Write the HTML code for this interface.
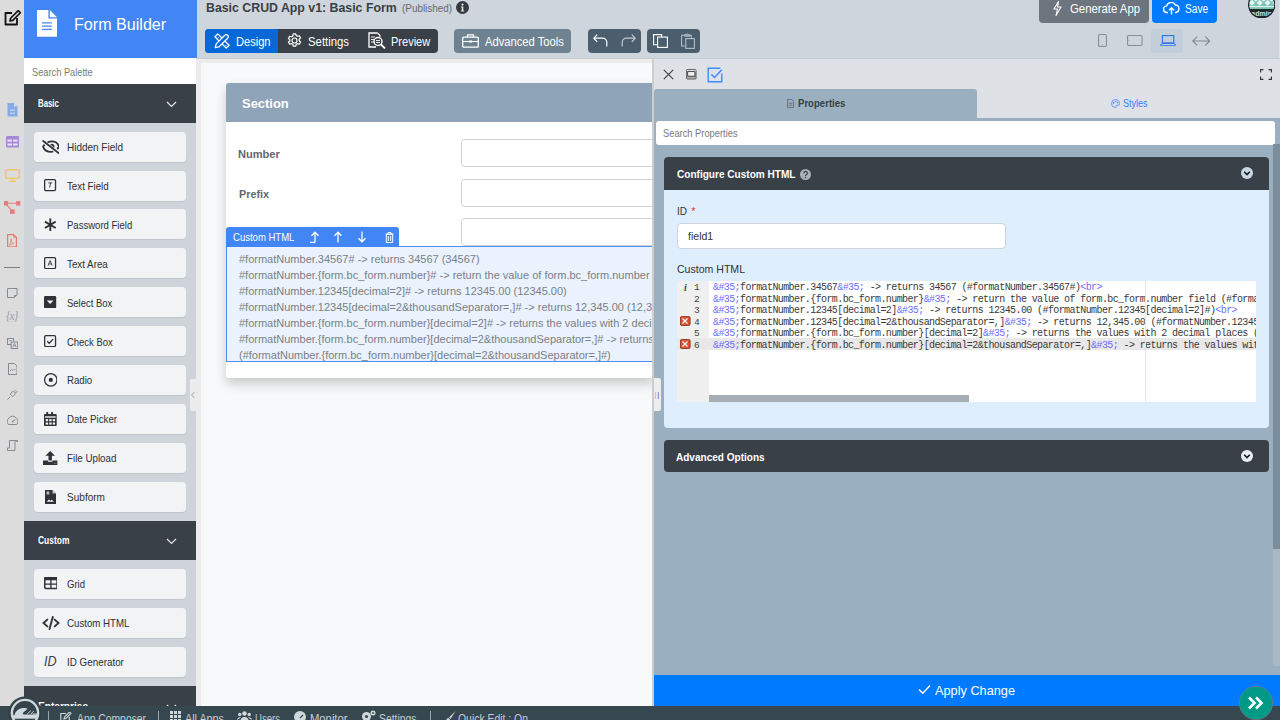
<!DOCTYPE html>
<html><head><meta charset="utf-8">
<style>*{box-sizing:border-box;margin:0;padding:0}
html,body{width:1280px;height:720px;overflow:hidden;font-family:"Liberation Sans",sans-serif;background:#f8f9fa}
.a{position:absolute}
svg{display:block}
.tx{line-height:1;white-space:nowrap;transform-origin:0 0}
.ln{position:absolute;left:0;height:11.5px;font-family:"Liberation Mono",monospace;font-size:10px;letter-spacing:-0.6px;color:#3a3a3a;white-space:nowrap;line-height:11.5px}
.ln .n{position:absolute;left:17px;top:1.5px;color:#444;font-size:9.5px}
.ln .c{position:absolute;left:36px;top:1.5px}
.ln .b{color:#6d6dff}
</style></head><body>
<div class="a" style="left:0;top:0;width:24px;height:720px;background:#dcdcdc"></div>
<svg class="a" style="left:3px;top:10px" width="19" height="17" viewBox="0 0 19 17"><path d="M9 3H2.5v11.5H14V8" fill="none" stroke="#111" stroke-width="1.8" stroke-linejoin="round"/><path d="M7 11l.6-2.8 7.6-7.6 2.2 2.2-7.6 7.6z" fill="none" stroke="#111" stroke-width="1.6" stroke-linejoin="round"/></svg>
<svg class="a" style="left:7px;top:102.5px" width="11" height="14" viewBox="0 0 11 14"><path d="M.5 0h6.5l3.5 3.5V13.5H.5z" fill="#86ace8"/><path d="M7 0v3.5h3.5z" fill="#dcdcdc"/><path d="M3 7.2h5M3 10.2h5" stroke="#d6e2f5" stroke-width="1"/></svg>
<svg class="a" style="left:5.8px;top:136.4px" width="13.4" height="11.4" viewBox="0 0 13.4 11.4"><rect x="0" y="0" width="13.4" height="11.4" rx="1.5" fill="#a88ad7"/><rect x="1.5" y="3.6" width="4.4" height="2" fill="#e9e2f3"/><rect x="7.1" y="3.6" width="4.4" height="2" fill="#e9e2f3"/><rect x="1.5" y="7.5" width="4.4" height="2" fill="#e9e2f3"/><rect x="7.1" y="7.5" width="4.4" height="2" fill="#e9e2f3"/></svg>
<svg class="a" style="left:5px;top:168.5px" width="15" height="13" viewBox="0 0 15 13"><rect x=".75" y=".75" width="13.5" height="8.5" rx="1" fill="none" stroke="#f1c66e" stroke-width="1.5"/><path d="M7.5 9.5v2.2M3.8 12.2h7.4" stroke="#f1c66e" stroke-width="1.4"/></svg>
<svg class="a" style="left:4px;top:201px" width="17" height="13" viewBox="0 0 17 13"><rect x="0" y="0" width="4.1" height="4.6" fill="#e57b7b"/><rect x="12.1" y="0" width="4.2" height="4.6" fill="#e57b7b"/><rect x="6" y="8.4" width="4.7" height="4.4" fill="#e57b7b"/><path d="M4 2.3h8.2M3.2 4.3L7 8.6" stroke="#e57b7b" stroke-width="1.1"/></svg>
<svg class="a" style="left:7px;top:233.5px" width="10" height="13.5" viewBox="0 0 10 13.5"><path d="M.6.6h6l2.8 2.8v9.5H.6z" fill="none" stroke="#e77b6b" stroke-width="1.2"/><path d="M6.6.6v2.8h2.8" fill="none" stroke="#e77b6b" stroke-width=".8"/><path d="M2.5 11c1-2 2-4.3 1.8-5.8-.1-.8-.8-.4-.5.7.4 1.5 1.8 3.3 2.8 3.7-.9 0-3 .4-4.1 1.4z" fill="none" stroke="#e77b6b" stroke-width=".8"/></svg>
<div class="a" style="left:4px;top:267px;width:16.4px;height:1px;background:#7a7f85"></div>
<svg class="a" style="left:7px;top:288px" width="10.5" height="10" viewBox="0 0 10.5 10"><path d="M.5.5h9.5v6.5L7 9.5H.5z" fill="none" stroke="#858b94" stroke-width="1"/><path d="M10 7H7v2.5z" fill="#858b94"/></svg>
<div class="a" style="left:6px;top:311px;font-size:11.5px;line-height:1;font-style:italic;color:#9ba0a8;letter-spacing:-1px;font-family:'Liberation Serif',serif">{x}</div>
<svg class="a" style="left:6.7px;top:337.9px" width="11.2" height="11" viewBox="0 0 11.2 11"><rect x=".5" y=".5" width="6" height="6" fill="none" stroke="#858b94" stroke-width="1"/><rect x="4.2" y="4" width="6.5" height="6.5" fill="#dcdcdc" stroke="#858b94" stroke-width="1"/><path d="M5.8 9.2l1.7-4 1.7 4M6.5 7.8h2" fill="none" stroke="#858b94" stroke-width=".8"/><path d="M2 2.5h2.5" stroke="#858b94" stroke-width=".8"/></svg>
<svg class="a" style="left:7.7px;top:362.9px" width="9.5" height="12" viewBox="0 0 9.5 12"><path d="M.5.5h6l2.5 2.5v8.5H.5z" fill="none" stroke="#858b94" stroke-width="1"/><path d="M2 8l1.5-1.5 1.5 1 1.5-1.5 1 1" fill="none" stroke="#858b94" stroke-width=".8"/></svg>
<svg class="a" style="left:7px;top:388.7px" width="11" height="11" viewBox="0 0 11 11"><path d="M.5 10.5l2.5-2.5M3.3 5.2l2.5 2.5 1.8-1.8c.8-.8.8-2 0-2.6l-.2-.2c-.7-.7-1.9-.7-2.6 0z" fill="none" stroke="#858b94" stroke-width="1"/><path d="M7 2.5L9 .5M8.5 4L10.5 2" stroke="#858b94" stroke-width="1"/></svg>
<svg class="a" style="left:6.7px;top:415px" width="11.2" height="10" viewBox="0 0 11.2 10"><path d="M1.3 9.5A5.2 5.2 0 1 1 9.9 9.5z" fill="none" stroke="#858b94" stroke-width="1"/><path d="M5.6 6.6l2.6-2.2" stroke="#858b94" stroke-width="1.1"/><circle cx="5.6" cy="6.6" r=".9" fill="#858b94"/></svg>
<svg class="a" style="left:6.7px;top:439.6px" width="11.2" height="11" viewBox="0 0 11.2 11"><path d="M2.5 8V.5h8v1.5M2.5 8H.5v2.5h7.5V1.2M9 1.2h1.7" fill="none" stroke="#858b94" stroke-width="1"/></svg>

<div class="a" style="left:24px;top:0;width:173px;height:58px;background:#4285f4"></div>
<svg class="a" style="left:37px;top:10px" width="20" height="27" viewBox="0 0 20 27"><path d="M0 0H11.4V8.6H20V26.7H0z" fill="#fff"/><path d="M12.8 0L20 7.2H12.8z" fill="#fff"/><path d="M5 12.9h9.8M5 16.1h9.8M5 19.3h9.8" stroke="#4285f4" stroke-width="1.3"/></svg>
<div class="a tx" style="transform:scaleX(0.9475);left:73.5px;top:16.05px;font-size:17px;color:#fff;">Form Builder</div>
<div class="a" style="left:24px;top:58px;width:172px;height:26px;background:#fff"></div>
<div class="a tx" style="transform:scaleX(0.8412);left:32.3px;top:66.95px;font-size:11px;color:#7a7a7a;">Search Palette</div>
<div class="a" style="left:24px;top:84px;width:172.5px;height:621px;background:#ced4da"></div>
<div class="a" style="left:24px;top:84px;width:172.5px;height:39px;background:#3a4047"></div>
<div class="a tx" style="transform:scaleX(0.7456);left:37.5px;top:98.38px;font-size:10.5px;color:#fff;font-weight:bold;">Basic</div>
<svg class="a" style="left:166px;top:101px" width="11" height="7" viewBox="0 0 11 7"><path d="M1 1l4.5 4.5L10 1" fill="none" stroke="#e8e8e8" stroke-width="1.2"/></svg>
<div class="a" style="left:34px;top:131.6px;width:152px;height:30px;background:#f1f3f5;border-radius:4px;box-shadow:0 1px 1px rgba(0,0,0,.07)"></div>
<div class="a" style="left:35.5px;top:131.6px;width:30px;height:30px;display:flex;align-items:center;justify-content:center"><svg width="17.7" height="14" viewBox="0 0 17.7 14"><path d="M1.2 1L16.6 13" stroke="#2f3237" stroke-width="1.8" stroke-linecap="round"/><path d="M5.5 2.6C6.8 1.8 8.4 1.4 10 1.4c3.4 0 6 2.4 7 4.9-.4 1-1 2-1.8 2.8" fill="none" stroke="#2f3237" stroke-width="1.8"/><path d="M2.6 4.6C1.9 5.3 1.4 6 1.1 6.8c1.2 3 4 5 7.9 5 .8 0 1.6-.1 2.3-.3" fill="none" stroke="#2f3237" stroke-width="1.8"/><path d="M8.2 4.2a2.9 2.9 0 0 1 4.1 3.7z" fill="#2f3237"/></svg></div>
<div class="a tx" style="transform:scaleX(0.8828);left:67px;top:142.00px;font-size:11.3px;color:#2c3035;">Hidden Field</div>
<div class="a" style="left:34px;top:170.5px;width:152px;height:30px;background:#f1f3f5;border-radius:4px;box-shadow:0 1px 1px rgba(0,0,0,.07)"></div>
<div class="a" style="left:35.5px;top:170.5px;width:30px;height:30px;display:flex;align-items:center;justify-content:center"><svg width="12.2" height="12.2" viewBox="0 0 12.2 12.2"><rect x=".65" y=".65" width="10.9" height="10.9" rx="1.2" fill="none" stroke="#2f3237" stroke-width="1.3"/><path d="M4.3 3.9h4M6.6 3.9L5.6 8.6" stroke="#2f3237" stroke-width=".9"/></svg></div>
<div class="a tx" style="transform:scaleX(0.8605);left:67px;top:180.90px;font-size:11.3px;color:#2c3035;">Text Field</div>
<div class="a" style="left:34px;top:209.4px;width:152px;height:30px;background:#f1f3f5;border-radius:4px;box-shadow:0 1px 1px rgba(0,0,0,.07)"></div>
<div class="a" style="left:35.5px;top:209.4px;width:30px;height:30px;display:flex;align-items:center;justify-content:center"><svg width="12.6" height="13.6" viewBox="0 0 12.6 13.6"><path d="M6.3 .5v12.6M.9 3.6l10.8 6.4M11.7 3.6L.9 10" stroke="#2f3237" stroke-width="1.9"/></svg></div>
<div class="a tx" style="transform:scaleX(0.8442);left:67px;top:219.80px;font-size:11.3px;color:#2c3035;">Password Field</div>
<div class="a" style="left:34px;top:248.3px;width:152px;height:30px;background:#f1f3f5;border-radius:4px;box-shadow:0 1px 1px rgba(0,0,0,.07)"></div>
<div class="a" style="left:35.5px;top:248.3px;width:30px;height:30px;display:flex;align-items:center;justify-content:center"><svg width="12.2" height="12.2" viewBox="0 0 12.2 12.2"><rect x=".65" y=".65" width="10.9" height="10.9" rx="1.2" fill="none" stroke="#2f3237" stroke-width="1.3"/><path d="M4 8.7l2.1-5.2 2.1 5.2M4.8 7h2.6" fill="none" stroke="#2f3237" stroke-width=".85"/></svg></div>
<div class="a tx" style="transform:scaleX(0.8661);left:67px;top:258.69px;font-size:11.3px;color:#2c3035;">Text Area</div>
<div class="a" style="left:34px;top:287.2px;width:152px;height:30px;background:#f1f3f5;border-radius:4px;box-shadow:0 1px 1px rgba(0,0,0,.07)"></div>
<div class="a" style="left:35.5px;top:287.2px;width:30px;height:30px;display:flex;align-items:center;justify-content:center"><svg width="12.2" height="12.2" viewBox="0 0 12.2 12.2"><rect x="0" y="0" width="12.2" height="12.2" rx="1.3" fill="#2f3237"/><path d="M2.8 4.6h6.6L6.1 8z" fill="#f1f3f5"/></svg></div>
<div class="a tx" style="transform:scaleX(0.8368);left:67px;top:297.59px;font-size:11.3px;color:#2c3035;">Select Box</div>
<div class="a" style="left:34px;top:326.1px;width:152px;height:30px;background:#f1f3f5;border-radius:4px;box-shadow:0 1px 1px rgba(0,0,0,.07)"></div>
<div class="a" style="left:35.5px;top:326.1px;width:30px;height:30px;display:flex;align-items:center;justify-content:center"><svg width="12.2" height="12.2" viewBox="0 0 12.2 12.2"><rect x=".65" y=".65" width="10.9" height="10.9" rx="1.2" fill="none" stroke="#2f3237" stroke-width="1.3"/><path d="M3.2 6.3l2 2 3.9-4.2" fill="none" stroke="#2f3237" stroke-width="1.3"/></svg></div>
<div class="a tx" style="transform:scaleX(0.8382);left:67px;top:336.50px;font-size:11.3px;color:#2c3035;">Check Box</div>
<div class="a" style="left:34px;top:365.0px;width:152px;height:30px;background:#f1f3f5;border-radius:4px;box-shadow:0 1px 1px rgba(0,0,0,.07)"></div>
<div class="a" style="left:35.5px;top:365.0px;width:30px;height:30px;display:flex;align-items:center;justify-content:center"><svg width="13.6" height="13.8" viewBox="0 0 13.6 13.8"><circle cx="6.8" cy="6.9" r="6.2" fill="none" stroke="#2f3237" stroke-width="1.25"/><circle cx="6.8" cy="6.9" r="2.1" fill="#2f3237"/></svg></div>
<div class="a tx" style="transform:scaleX(0.8533);left:67px;top:375.39px;font-size:11.3px;color:#2c3035;">Radio</div>
<div class="a" style="left:34px;top:403.9px;width:152px;height:30px;background:#f1f3f5;border-radius:4px;box-shadow:0 1px 1px rgba(0,0,0,.07)"></div>
<div class="a" style="left:35.5px;top:403.9px;width:30px;height:30px;display:flex;align-items:center;justify-content:center"><svg width="12.7" height="14" viewBox="0 0 12.7 14"><path d="M3.2 0v2.6M8.1 0v2.6" stroke="#2f3237" stroke-width="1.9"/><rect x="0" y="2" width="12.7" height="12" rx=".8" fill="#2f3237"/><rect x="1" y="4" width="10.7" height="2" fill="#b8b8b8"/><rect x="1.7" y="7.1" width="2.4" height="2.1" fill="#f1f3f5"/><rect x="5.2" y="7.1" width="2.4" height="2.1" fill="#f1f3f5"/><rect x="8.7" y="7.1" width="2.4" height="2.1" fill="#f1f3f5"/><rect x="1.7" y="10.5" width="2.4" height="2.1" fill="#f1f3f5"/><rect x="5.2" y="10.5" width="2.4" height="2.1" fill="#f1f3f5"/><rect x="8.7" y="10.5" width="2.4" height="2.1" fill="#f1f3f5"/></svg></div>
<div class="a tx" style="transform:scaleX(0.8563);left:67px;top:414.29px;font-size:11.3px;color:#2c3035;">Date Picker</div>
<div class="a" style="left:34px;top:442.8px;width:152px;height:30px;background:#f1f3f5;border-radius:4px;box-shadow:0 1px 1px rgba(0,0,0,.07)"></div>
<div class="a" style="left:35.5px;top:442.8px;width:30px;height:30px;display:flex;align-items:center;justify-content:center"><svg width="14.4" height="14.2" viewBox="0 0 14.4 14.2"><path d="M7.2 0L2.5 4.8h3v4.8h3.4V4.8h3z" fill="#2f3237"/><path d="M0 9.4h5v1.4h4.4V9.4h5v4.8H0z" fill="#2f3237"/><path d="M11 12.3h.9M12.5 12.3h.9" stroke="#aaa" stroke-width=".8"/></svg></div>
<div class="a tx" style="transform:scaleX(0.8643);left:67px;top:453.19px;font-size:11.3px;color:#2c3035;">File Upload</div>
<div class="a" style="left:34px;top:481.7px;width:152px;height:30px;background:#f1f3f5;border-radius:4px;box-shadow:0 1px 1px rgba(0,0,0,.07)"></div>
<div class="a" style="left:35.5px;top:481.7px;width:30px;height:30px;display:flex;align-items:center;justify-content:center"><svg width="11" height="14" viewBox="0 0 11 14"><path d="M0 0h7.5L11 3.5V14H0z" fill="#2f3237"/><path d="M7.5 0v3.5H11z" fill="#c8c8c8"/><rect x="1.5" y="1.5" width="2.8" height="3" fill="#b8b8b8"/><path d="M1.8 11.8l2-2.4 1.5 1.4 1.2-1 2.6 2z" fill="#f1f3f5"/></svg></div>
<div class="a tx" style="transform:scaleX(0.8899);left:67px;top:492.09px;font-size:11.3px;color:#2c3035;">Subform</div>
<div class="a" style="left:24px;top:520.8px;width:172.5px;height:39px;background:#3a4047"></div>
<div class="a tx" style="transform:scaleX(0.8032);left:37.5px;top:535.17px;font-size:10.5px;color:#fff;font-weight:bold;">Custom</div>
<svg class="a" style="left:166px;top:537.8px" width="11" height="7" viewBox="0 0 11 7"><path d="M1 1l4.5 4.5L10 1" fill="none" stroke="#e8e8e8" stroke-width="1.2"/></svg>
<div class="a" style="left:34px;top:568.8px;width:152px;height:30px;background:#f1f3f5;border-radius:4px;box-shadow:0 1px 1px rgba(0,0,0,.07)"></div>
<div class="a" style="left:35.5px;top:568.4px;width:30px;height:30px;display:flex;align-items:center;justify-content:center"><svg width="13.8" height="12.3" viewBox="0 0 13.8 12.3"><rect x=".75" y=".75" width="12.3" height="10.8" rx="1" fill="none" stroke="#2f3237" stroke-width="1.5"/><rect x="0" y="0" width="13.8" height="3.2" rx="1" fill="#2f3237"/><path d="M6.9 3v8.5M.7 7.1h12.4" stroke="#2f3237" stroke-width="1.3"/></svg></div>
<div class="a tx" style="transform:scaleX(0.8433);left:67px;top:579.19px;font-size:11.3px;color:#2c3035;">Grid</div>
<div class="a" style="left:34px;top:607.7px;width:152px;height:30px;background:#f1f3f5;border-radius:4px;box-shadow:0 1px 1px rgba(0,0,0,.07)"></div>
<div class="a" style="left:35.5px;top:608.2px;width:30px;height:30px;display:flex;align-items:center;justify-content:center"><svg width="18" height="14" viewBox="0 0 18 14"><path d="M5.3 3.6L1.5 7l3.8 3.4M12.7 3.6L16.5 7l-3.8 3.4M10.8 1L7.5 13" fill="none" stroke="#2f3237" stroke-width="1.9" stroke-linecap="round"/></svg></div>
<div class="a tx" style="transform:scaleX(0.8570);left:67px;top:618.10px;font-size:11.3px;color:#2c3035;">Custom HTML</div>
<div class="a" style="left:34px;top:646.6px;width:152px;height:30px;background:#f1f3f5;border-radius:4px;box-shadow:0 1px 1px rgba(0,0,0,.07)"></div>
<div class="a" style="left:35.5px;top:646.6px;width:30px;height:30px;display:flex;align-items:center;justify-content:center"><div style="width:14px;height:12px;position:relative"><div style="position:absolute;left:0;top:-1.5px;line-height:1;font-size:14px;font-style:italic;color:#3a3e44;transform:scaleX(.9);transform-origin:0 0;white-space:nowrap">ID</div></div></div>
<div class="a tx" style="transform:scaleX(0.8712);left:67px;top:657.00px;font-size:11.3px;color:#2c3035;">ID Generator</div>
<div class="a" style="left:24px;top:685.8px;width:172.5px;height:40px;background:#3a4047"></div>
<div class="a tx" style="transform:scaleX(0.9627);left:37.5px;top:701.17px;font-size:10.5px;color:#fff;font-weight:bold;">Enterprise</div>
<svg class="a" style="left:166px;top:703.8px" width="11" height="7" viewBox="0 0 11 7"><path d="M1 1l4.5 4.5L10 1" fill="none" stroke="#e8e8e8" stroke-width="1.2"/></svg>
<div class="a" style="left:189.6px;top:378.7px;width:6.4px;height:32.6px;background:#ececec;border-radius:2px 0 0 2px"></div>
<svg class="a" style="left:190px;top:391px" width="6" height="8" viewBox="0 0 6 8"><path d="M4.5 1L1.5 4l3 3" fill="none" stroke="#9a9aa0" stroke-width="0.9"/></svg>
<div class="a" style="left:197px;top:0;width:1083px;height:58px;background:#cfd5dc"></div>
<div class="a tx" style="transform:scaleX(0.9486);left:206.25px;top:0.85px;font-size:13px;color:#3a3f44;font-weight:bold;">Basic CRUD App v1: Basic Form</div>
<div class="a tx" style="transform:scaleX(0.9412);left:402px;top:3.28px;font-size:10.5px;color:#646a70;">(Published)</div>
<svg class="a" style="left:456.2px;top:0.8px" width="13" height="13" viewBox="0 0 13 13"><circle cx="6.5" cy="6.5" r="6.5" fill="#343a40"/><circle cx="6.5" cy="3.6" r="1.05" fill="#e8e8e8"/><path d="M5 5.4h2.3v4h.9v1.1H4.9V9.4h.9V6.5H5z" fill="#e8e8e8"/></svg>
<div class="a" style="height:24px;border-radius:4px;left:205px;top:28.5px;width:233px;background:#3a4047"></div>
<div class="a" style="height:24px;border-radius:4px;left:205px;top:28.5px;width:73px;background:#0769d8;border-radius:4px 0 0 4px"></div>
<svg class="a" style="left:214.3px;top:32.8px" width="16" height="16" viewBox="0 0 16 16"><path d="M.9 3.8L3.8.9l11.3 11.3-2.9 2.9z" fill="none" stroke="#fff" stroke-width="1.3" stroke-linejoin="round"/><path d="M3.3 5.4l1.1-1.1M11.1 13.2l1.1-1.1" stroke="#fff" stroke-width="1"/><path d="M1.3 14.7l.9-3.8 8.6-8.6a2 2 0 0 1 2.9 2.9l-8.6 8.6z" fill="#0769d8" stroke="#fff" stroke-width="1.3" stroke-linejoin="round"/></svg>
<svg class="a" style="left:287px;top:33px" width="15" height="15" viewBox="0 0 15 15"><path d="M6.2.8h2.6l.4 1.8 1.3.7 1.8-.6 1.3 2.2-1.4 1.3v1.5l1.4 1.3-1.3 2.2-1.8-.6-1.3.7-.4 1.8H6.2l-.4-1.8-1.3-.7-1.8.6-1.3-2.2L2.8 8.2V6.7L1.4 5.4l1.3-2.2 1.8.6 1.3-.7z" fill="none" stroke="#fff" stroke-width="1.2" stroke-linejoin="round"/><circle cx="7.5" cy="7.5" r="2.5" fill="none" stroke="#fff" stroke-width="1.2"/></svg>
<svg class="a" style="left:368px;top:32px" width="18" height="17" viewBox="0 0 18 17"><path d="M9.5 1H1v14h7" fill="none" stroke="#fff" stroke-width="1.3"/><path d="M9.5 1l2.5 2.5V5" fill="none" stroke="#fff" stroke-width="1.1"/><circle cx="10" cy="9.5" r="4" fill="#3a4047" stroke="#fff" stroke-width="1.4"/><path d="M13 12.5l4 4" stroke="#fff" stroke-width="1.8"/><path d="M3 5h4M3 7.5h3.5M3 10h3.5M8 8.5h4M8 10.5h4" stroke="#fff" stroke-width="0.9"/></svg>
<div class="a" style="height:24px;border-radius:4px;left:454px;top:28.5px;width:117px;background:#6e8291"></div>
<svg class="a" style="left:462px;top:34px" width="17" height="14" viewBox="0 0 17 14"><rect x=".7" y="3.2" width="15.6" height="10" rx="1" fill="none" stroke="#fff" stroke-width="1.3"/><path d="M5.5 3.2V.9h6v2.3M.7 7.5h15.6" fill="none" stroke="#fff" stroke-width="1.2"/><path d="M7 6.5h3v2H7z" fill="#fff"/></svg>
<div class="a" style="height:24px;border-radius:4px;left:588px;top:28.5px;width:53px;background:#4b5e6e"></div>
<svg class="a" style="left:592.5px;top:34px" width="15" height="13" viewBox="0 0 15 13"><path d="M4.2.6L.8 4.2l3.4 3.6" fill="none" stroke="#fff" stroke-width="1.2"/><path d="M1 4.2h8.5a4.3 4.3 0 0 1 4.3 4.3v4" fill="none" stroke="#fff" stroke-width="1.2"/></svg>
<svg class="a" style="left:620.8px;top:34px" width="15" height="13" viewBox="0 0 15 13"><path d="M10.8.6l3.4 3.6-3.4 3.6" fill="none" stroke="#c3ccd3" stroke-width="1.2"/><path d="M14 4.2H5.5A4.3 4.3 0 0 0 1.2 8.5v4" fill="none" stroke="#c3ccd3" stroke-width="1.2"/></svg>
<div class="a" style="height:24px;border-radius:4px;left:647px;top:28.5px;width:53px;background:#4b5e6e"></div>
<svg class="a" style="left:652.5px;top:33.5px" width="15" height="14" viewBox="0 0 15 14"><path d="M4.5 10.8H.6V.6h8v3" fill="none" stroke="#fff" stroke-width="1.1"/><rect x="4.6" y="3.1" width="9.8" height="10.3" fill="none" stroke="#fff" stroke-width="1.1"/></svg>
<svg class="a" style="left:681px;top:33px" width="14" height="16" viewBox="0 0 14 16"><path d="M4.3 13H.6V2.2h9.6v3" fill="none" stroke="#b3bec6" stroke-width="1.1"/><path d="M3.5 3.2V1.8h1.6a1 1 0 0 1 2 0h1.6v1.4z" fill="none" stroke="#b3bec6" stroke-width="1"/><rect x="4.8" y="5.6" width="8.6" height="9.8" fill="none" stroke="#b3bec6" stroke-width="1.1"/></svg>
<div class="a" style="height:24px;border-radius:4px;left:1039px;top:-4px;height:27px;width:110px;background:#6c757d"></div>
<svg class="a" style="left:1053px;top:1px" width="9" height="15" viewBox="0 0 9 15"><path d="M5.5 .5L1 8h3.5L3 14.5 8 6H4.5z" fill="none" stroke="#fff" stroke-width="1.1" stroke-linejoin="round"/></svg>
<div class="a" style="height:24px;border-radius:4px;left:1152px;top:-4px;height:27px;width:65px;background:#007bff"></div>
<svg class="a" style="left:1163px;top:2px" width="17" height="13" viewBox="0 0 17 13"><path d="M5 10.5H4a3.3 3.3 0 0 1-.3-6.6A4.6 4.6 0 0 1 12.3 3a3.8 3.8 0 0 1 .7 7.5h-1" fill="none" stroke="#fff" stroke-width="1.4"/><path d="M8.5 12.5V6M6 8.3l2.5-2.5L11 8.3" fill="none" stroke="#fff" stroke-width="1.4"/></svg>
<svg class="a" style="left:1247.6px;top:-9.4px" width="27.4" height="27.4" viewBox="0 0 28 28"><defs><clipPath id="av"><circle cx="14" cy="14" r="12.8"/></clipPath></defs><circle cx="14" cy="14" r="14" fill="#1c2424"/><g clip-path="url(#av)"><rect x="0" y="0" width="28" height="18.5" fill="#7fc4b8"/><path d="M1 12l3-3 3 3-3 3zM9 12l3-3 3 3-3 3zM17 12l3-3 3 3-3 3zM25 12l3-3 3 3-3 3zM5 8l3-3 3 3-3 3zM13 8l3-3 3 3-3 3zM21 8l3-3 3 3-3 3z" fill="#f2faf8" opacity=".9"/><path d="M0 16h28" stroke="#f2faf8" stroke-width="1"/><rect x="0" y="18.5" width="28" height="10" fill="#1e2a2a"/><text x="14" y="25.2" font-family="Liberation Sans" font-size="7.2" font-weight="bold" fill="#d6e6e2" text-anchor="middle">admin</text></g></svg>
<svg class="a" style="left:1097.9px;top:33.9px" width="9" height="13" viewBox="0 0 9 13"><rect x=".55" y=".55" width="7.9" height="11.9" rx="1.2" fill="none" stroke="#858f99" stroke-width="1.1"/><path d="M3.9 11h1.2" stroke="#858f99" stroke-width=".8"/></svg>
<svg class="a" style="left:1127.3px;top:35px" width="15.6" height="11" viewBox="0 0 15.6 11"><rect x=".55" y=".55" width="14.5" height="9.9" rx="1.2" fill="none" stroke="#858f99" stroke-width="1.1"/><path d="M2.1 4.9v1" stroke="#858f99" stroke-width=".8"/></svg>
<div class="a" style="left:1151.4px;top:28.5px;width:32px;height:24px;background:#c4cedb;border-radius:3px"></div>
<svg class="a" style="left:1159.8px;top:34.8px" width="16.2" height="11.2" viewBox="0 0 16.2 11.2"><rect x="2.4" y=".6" width="11.4" height="7.4" fill="none" stroke="#2370ee" stroke-width="1.1"/><path d="M2.2 8.4h11.8l1.6 1.4a.6.6 0 0 1-.4 1H1a.6.6 0 0 1-.4-1z" fill="none" stroke="#2370ee" stroke-width="1"/></svg>
<svg class="a" style="left:1191.5px;top:35.5px" width="18.5" height="10" viewBox="0 0 18.5 10"><path d="M.8 5h16.9M5.2.6L.8 5l4.4 4.4M13.3.6L17.7 5l-4.4 4.4" fill="none" stroke="#808a94" stroke-width="1.15"/></svg>

<div class="a tx" style="transform:scaleX(0.9012);left:236px;top:35.55px;font-size:12.3px;color:#fff;">Design</div>
<div class="a tx" style="transform:scaleX(0.9226);left:308px;top:35.55px;font-size:12.3px;color:#fff;">Settings</div>
<div class="a tx" style="transform:scaleX(0.8960);left:391.4px;top:35.55px;font-size:12.3px;color:#fff;">Preview</div>
<div class="a tx" style="transform:scaleX(0.9098);left:484.5px;top:35.55px;font-size:12.3px;color:#fff;">Advanced Tools</div>
<div class="a tx" style="transform:scaleX(0.9224);left:1070.4px;top:2.85px;font-size:12.3px;color:#fff;">Generate App</div>
<div class="a tx" style="transform:scaleX(0.8276);left:1184.9px;top:2.85px;font-size:12.3px;color:#fff;">Save</div>
<div class="a" style="left:196px;top:58px;width:458px;height:648px;background:#ececec"></div>
<div class="a" style="left:201px;top:63px;width:453px;height:643px;background:#f8f9fa"></div>
<div class="a" style="left:226px;top:83.3px;width:428px;height:295.2px;background:#fff;border-radius:3px;box-shadow:0 6px 12px rgba(0,0,0,.19)"></div>
<div class="a" style="left:226px;top:83.3px;width:428px;height:38.7px;background:#8fa4b8;border-radius:3px 0 0 0"></div>
<div class="a tx" style="transform:scaleX(0.9664);left:242px;top:96.61px;font-size:13.4px;color:#fff;font-weight:bold;">Section</div>
<div class="a tx" style="transform:scaleX(0.9608);left:238.25px;top:149.03px;font-size:11.5px;color:#62686e;font-weight:bold;">Number</div>
<div class="a tx" style="transform:scaleX(0.9384);left:238.5px;top:189.03px;font-size:11.5px;color:#62686e;font-weight:bold;">Prefix</div>
<div class="a" style="left:461px;top:139px;width:220px;height:28px;background:#fff;border:1px solid #ced4da;border-radius:4px"></div>
<div class="a" style="left:461px;top:179px;width:220px;height:28px;background:#fff;border:1px solid #ced4da;border-radius:4px"></div>
<div class="a" style="left:461px;top:218px;width:220px;height:28px;background:#fff;border:1px solid #ced4da;border-radius:4px"></div>
<div class="a" style="left:226px;top:246px;width:440px;height:116px;background:#eaf2fd;border:1px solid #4f8ff0"></div>
<div class="a tx" style="left:239px;top:253.65px;font-size:11px;color:#7a8087;">#formatNumber.34567# -&gt; returns 34567 (34567)</div>
<div class="a tx" style="left:239px;top:269.65px;font-size:11px;color:#7a8087;">#formatNumber.{form.bc_form.number}# -&gt; return the value of form.bc_form.number field (#formatNumber.{form.bc_form.number}#)</div>
<div class="a tx" style="left:239px;top:285.65px;font-size:11px;color:#7a8087;">#formatNumber.12345[decimal=2]# -&gt; returns 12345.00 (12345.00)</div>
<div class="a tx" style="left:239px;top:301.65px;font-size:11px;color:#7a8087;">#formatNumber.12345[decimal=2&amp;thousandSeparator=,]# -&gt; returns 12,345.00 (12,345.00)</div>
<div class="a tx" style="left:239px;top:317.65px;font-size:11px;color:#7a8087;">#formatNumber.{form.bc_form.number}[decimal=2]# -&gt; returns the values with 2 decimal places (#formatNumber)</div>
<div class="a tx" style="left:239px;top:333.65px;font-size:11px;color:#7a8087;">#formatNumber.{form.bc_form.number}[decimal=2&amp;thousandSeparator=,]# -&gt; returns the values with</div>
<div class="a tx" style="left:239px;top:349.65px;font-size:11px;color:#7a8087;">(#formatNumber.{form.bc_form.number}[decimal=2&amp;thousandSeparator=,]#)</div>
<div class="a" style="left:226px;top:227px;width:173px;height:20px;background:#4285f4;border-radius:3px 3px 0 0"></div>
<div class="a tx" style="transform:scaleX(0.9071);left:232.8px;top:232.07px;font-size:10.5px;color:#fff;">Custom HTML</div>
<svg class="a" style="left:309px;top:231px" width="11" height="12" viewBox="0 0 11 12"><path d="M6 11.5V1.2M2.5 4.7L6 1.2l3.5 3.5M1 11.3h5" fill="none" stroke="#fff" stroke-width="1.3"/></svg>
<svg class="a" style="left:333px;top:231px" width="10" height="12" viewBox="0 0 10 12"><path d="M5 11.5V1.2M1.5 4.7L5 1.2l3.5 3.5" fill="none" stroke="#fff" stroke-width="1.3"/></svg>
<svg class="a" style="left:357px;top:231px" width="10" height="12" viewBox="0 0 10 12"><path d="M5 .5V10.8M1.5 7.3L5 10.8l3.5-3.5" fill="none" stroke="#fff" stroke-width="1.3"/></svg>
<svg class="a" style="left:385px;top:232px" width="9" height="11" viewBox="0 0 9 11"><path d="M.5 2h8M3 2V.6h3V2M1.3 2.5h6.4v8H1.3z" fill="none" stroke="#fff" stroke-width="1"/><path d="M3.3 4v5M5.7 4v5" stroke="#fff" stroke-width="1"/></svg>

<div class="a" style="left:652px;top:58px;width:2px;height:648px;background:#cdcdcd"></div>
<div class="a" style="left:654px;top:58px;width:626px;height:648px;background:#9aafc0"></div>
<div class="a" style="left:654px;top:58px;width:626px;height:62px;background:#dee2e6"></div>
<div class="a" style="left:654px;top:89px;width:323px;height:29px;background:#9aafc0;border-radius:3px 3px 0 0"></div>
<div class="a" style="left:654px;top:118px;width:626px;height:2px;background:#9aafc0"></div>
<div class="a" style="left:197px;top:58px;width:1083px;height:1px;background:#c7cacb"></div>
<svg class="a" style="left:662.5px;top:69px" width="11" height="11" viewBox="0 0 11 11"><path d="M.8.8l9.4 9.4M10.2.8L.8 10.2" stroke="#3a3a3a" stroke-width="1.05"/></svg>
<svg class="a" style="left:686px;top:69px" width="10.6" height="10.6" viewBox="0 0 10.6 10.6"><rect x=".5" y=".5" width="9.6" height="9.6" rx=".8" fill="#a9a9a9" stroke="#6b6b6b" stroke-width="1"/><rect x="1" y="1" width="8.6" height="2" fill="#dcdcdc"/><rect x="1.7" y="2.6" width="7.2" height="4.6" fill="#f2f2f2" stroke="#3c3c3c" stroke-width=".9"/></svg>
<svg class="a" style="left:706.5px;top:66.5px" width="16" height="16" viewBox="0 0 16 16"><path d="M13.3 1.2H1.2v13.6h13.6V6.5" fill="none" stroke="#3b8cff" stroke-width="1.4"/><path d="M4.3 7.4l3.3 3.1 7.2-7.7" fill="none" stroke="#3b8cff" stroke-width="1.5"/></svg>
<svg class="a" style="left:1260px;top:69px" width="12" height="11" viewBox="0 0 12 11"><path d="M.6 3.4V.6h2.8M8.6.6h2.8v2.8M11.4 7.6v2.8H8.6M3.4 10.4H.6V7.6" fill="none" stroke="#333" stroke-width="1.15"/></svg>
<svg class="a" style="left:786.8px;top:99px" width="7" height="9" viewBox="0 0 7 9"><path d="M.4.4h4.2L6.6 2.4v6.2H.4z" fill="none" stroke="#5a6066" stroke-width=".8"/><path d="M1.6 4.3h3.8M1.6 6.2h3.8" stroke="#5a6066" stroke-width=".7"/></svg>
<svg class="a" style="left:1111px;top:99px" width="9" height="9" viewBox="0 0 9 9"><path d="M4.5.5a4 4 0 1 0 0 8c.7 0 .9-.5.5-1.1-.4-.6 0-1.1.6-1.1h1.3A1.6 1.6 0 0 0 8.5 4.5 4 4 0 0 0 4.5.5z" fill="none" stroke="#5b8ff5" stroke-width=".9"/><circle cx="2.6" cy="3.8" r=".9" fill="#2f80f8"/><circle cx="4.6" cy="2.5" r=".8" fill="#5b8ff5"/><circle cx="6.5" cy="3.6" r=".8" fill="#5b8ff5"/></svg>

<div class="a" style="left:1279px;top:0;width:1px;height:58px;background:#e2e5e8"></div>
<div class="a tx" style="transform:scaleX(0.8875);left:798.2px;top:97.82px;font-size:10.8px;color:#3a4047;font-weight:bold;">Properties</div>
<div class="a tx" style="transform:scaleX(0.8455);left:1123.4px;top:98.19px;font-size:10.6px;color:#2f80f8;">Styles</div>
<div class="a" style="left:656px;top:120.5px;width:619px;height:24px;background:#fff;border-radius:3px"></div>
<div class="a tx" style="transform:scaleX(0.8876);left:663.4px;top:128.07px;font-size:10.5px;color:#7a7a7a;">Search Properties</div>
<div class="a" style="left:1273px;top:144px;width:7px;height:405px;background:#7a8d9b"></div>
<div class="a" style="left:1273px;top:549px;width:7px;height:117px;background:#a8b9c6"></div>
<div class="a" style="left:664px;top:157px;width:605px;height:270.5px;background:#dfeefc;border-radius:4px;overflow:hidden"><div class="a" style="left:0;top:0;width:605px;height:32.5px;background:#3a4047"></div></div>
<div class="a tx" style="transform:scaleX(0.9147);left:677px;top:168.85px;font-size:11px;color:#fff;font-weight:bold;">Configure Custom HTML</div>
<div class="a tx" style="transform:scaleX(0.9091);left:677px;top:205.65px;font-size:11px;color:#333;">ID</div>
<div class="a tx" style="left:691.25px;top:205.65px;font-size:11px;color:#dc3545;">*</div>
<div class="a" style="left:677px;top:223px;width:329px;height:26px;background:#fff;border:1px solid #ced4da;border-radius:4px"></div>
<div class="a tx" style="transform:scaleX(0.9583);left:687.8px;top:230.95px;font-size:11px;color:#333;">field1</div>
<div class="a tx" style="transform:scaleX(0.9430);left:677.2px;top:264.28px;font-size:11.2px;color:#333;">Custom HTML</div>
<div class="a" style="left:677px;top:281px;width:579px;height:121px;background:#fff;overflow:hidden">
<div class="a" style="left:0;top:0;width:32px;height:121px;background:#f0f0f0"></div>
<div class="ln" style="top:-0.5px;width:579px;"><span style="position:absolute;left:7px;top:1px;font-family:'Liberation Serif',serif;font-style:italic;font-weight:bold;color:#444;font-size:10px">i</span><span class="n">1</span><span class="c"><span class="b">&amp;#35;</span>formatNumber.34567<span class="b">&amp;#35;</span> -&gt; returns 34567 (#formatNumber.34567#)<span class="b">&lt;br&gt;</span></span></div>
<div class="ln" style="top:11.0px;width:579px;"><span class="n">2</span><span class="c"><span class="b">&amp;#35;</span>formatNumber.{form.bc_form.number}<span class="b">&amp;#35;</span> -&gt; return the value of form.bc_form.number field (#formatNumber.{form.bc_form.number}#)<span class="b"></span></span></div>
<div class="ln" style="top:22.5px;width:579px;"><span class="n">3</span><span class="c"><span class="b">&amp;#35;</span>formatNumber.12345[decimal=2]<span class="b">&amp;#35;</span> -&gt; returns 12345.00 (#formatNumber.12345[decimal=2]#)<span class="b">&lt;br&gt;</span></span></div>
<div class="ln" style="top:34.0px;width:579px;"><svg style="position:absolute;left:3.2px;top:0.5px" width="10.5" height="10" viewBox="0 0 10.5 10"><rect x=".4" y=".4" width="9.7" height="9.2" rx="1.5" fill="#de4f2e" stroke="#7a2a18" stroke-width=".8"/><path d="M2.5 2.5l5 5M7.5 2.5l-5 5" stroke="#fff" stroke-width="1.3"/></svg><span class="n">4</span><span class="c"><span class="b">&amp;#35;</span>formatNumber.12345[decimal=2&amp;thousandSeparator=,]<span class="b">&amp;#35;</span> -&gt; returns 12,345.00 (#formatNumber.12345[decimal=2&amp;thousandSeparator=,]#)<span class="b"></span></span></div>
<div class="ln" style="top:45.5px;width:579px;"><span class="n">5</span><span class="c"><span class="b">&amp;#35;</span>formatNumber.{form.bc_form.number}[decimal=2]<span class="b">&amp;#35;</span> -&gt; returns the values with 2 decimal places (#formatNumber)<span class="b"></span></span></div>
<div class="ln" style="top:57.0px;width:579px;background:#e8e8e8;"><svg style="position:absolute;left:3.2px;top:0.5px" width="10.5" height="10" viewBox="0 0 10.5 10"><rect x=".4" y=".4" width="9.7" height="9.2" rx="1.5" fill="#de4f2e" stroke="#7a2a18" stroke-width=".8"/><path d="M2.5 2.5l5 5M7.5 2.5l-5 5" stroke="#fff" stroke-width="1.3"/></svg><span class="n">6</span><span class="c"><span class="b">&amp;#35;</span>formatNumber.{form.bc_form.number}[decimal=2&amp;thousandSeparator=,]<span class="b">&amp;#35;</span> -&gt; returns the values with 2 decimal places<span class="b"></span></span></div>
<div class="a" style="left:468px;top:0;width:1px;height:121px;background:#e4e4e4"></div>
<div class="a" style="left:32px;top:114px;width:260px;height:7px;background:#a5aeb5"></div>
</div>

<div class="a" style="left:664px;top:440.3px;width:605px;height:32px;background:#3a4047;border-radius:4px"></div>
<div class="a tx" style="transform:scaleX(0.9288);left:676.3px;top:451.82px;font-size:10.8px;color:#fff;font-weight:bold;">Advanced Options</div>
<svg class="a" style="left:800px;top:169px" width="11" height="11" viewBox="0 0 11 11"><circle cx="5.5" cy="5.5" r="5.5" fill="#aab1b8"/><path d="M3.8 4.2a1.8 1.8 0 1 1 2.5 1.6c-.6.3-.8.6-.8 1.3" fill="none" stroke="#3a4047" stroke-width="1.2"/><circle cx="5.5" cy="8.6" r=".75" fill="#3a4047"/></svg>
<svg class="a" style="left:1240.5px;top:167px" width="12" height="12" viewBox="0 0 12 12"><circle cx="6" cy="6" r="6" fill="#c7d6e6"/><path d="M3.2 4.8L6 7.6l2.8-2.8" fill="none" stroke="#1a1a1a" stroke-width="1.6"/></svg>
<svg class="a" style="left:1240.5px;top:450.3px" width="12" height="12" viewBox="0 0 12 12"><circle cx="6" cy="6" r="6" fill="#e8eef4"/><path d="M3.2 4.8L6 7.6l2.8-2.8" fill="none" stroke="#1a1a1a" stroke-width="1.6"/></svg>
<div class="a" style="left:654px;top:378px;width:7px;height:33px;background:#ededed;border-radius:0 2px 2px 0"></div>
<div class="a" style="left:655px;top:392px;width:1px;height:7px;background:#e8b8c0"></div>
<div class="a" style="left:656.5px;top:392px;width:1px;height:7px;background:#e0e080"></div>
<div class="a" style="left:658px;top:392px;width:1px;height:7px;background:#9898e0"></div>

<div class="a" style="left:654px;top:674.6px;width:626px;height:31.4px;background:#007bff"></div>
<svg class="a" style="left:918px;top:684px" width="13" height="11" viewBox="0 0 13 11"><path d="M1 5.5l3.8 3.8L12 1.5" fill="none" stroke="#fff" stroke-width="1.4"/></svg>
<div class="a tx" style="transform:scaleX(0.9795);left:935px;top:683.95px;font-size:13px;color:#fff;">Apply Change</div>
<div class="a" style="left:0;top:706px;width:1280px;height:14px;background:#37474f"></div>
<svg class="a" style="left:8.25px;top:696px" width="34" height="34" viewBox="0 0 34 34"><circle cx="17" cy="17" r="16.6" fill="#34434a"/><circle cx="17" cy="17" r="13.1" fill="none" stroke="#cfd8dc" stroke-width="2.4"/><path d="M6.2 21C6.6 15.5 10.5 12 15.5 12c1.8 0 3.1.3 4.2.8l-4.4 3.6c-1 .9-.6 2 .8 2H29v3.4H5.5z" fill="#cfd8dc"/><path d="M19.2 18l3.6-3.3M22.6 18l3.2-2.8M24.5 18h5" stroke="#cfd8dc" stroke-width="1"/><rect x="4" y="19.3" width="26" height="3.4" fill="#cfd8dc"/></svg>
<div class="a" style="left:48px;top:711px;width:1px;height:9px;background:#9aa5ab"></div>
<svg class="a" style="left:60px;top:712px" width="12" height="10" viewBox="0 0 12 10"><path d="M6 1.5H.8v8.5h8.5V5" fill="none" stroke="#cfd8dc" stroke-width="1.1"/><path d="M4 7l.5-2 5-5 1.5 1.5-5 5z" fill="none" stroke="#cfd8dc" stroke-width="1.1"/></svg>
<div class="a" style="left:158px;top:711px;width:1px;height:9px;background:#9aa5ab"></div>
<svg class="a" style="left:170px;top:711px" width="11" height="11" viewBox="0 0 11 11"><path d="M0 0h3v3H0zM4 0h3v3H4zM8 0h3v3H8zM0 4h3v3H0zM4 4h3v3H4zM8 4h3v3H8zM0 8h3v3H0zM4 8h3v3H4zM8 8h3v3H8z" fill="#cfd8dc"/></svg>
<svg class="a" style="left:237px;top:711px" width="15" height="10" viewBox="0 0 15 10"><circle cx="7.5" cy="2.5" r="2.3" fill="#cfd8dc"/><circle cx="2.8" cy="3.5" r="1.7" fill="#cfd8dc"/><circle cx="12.2" cy="3.5" r="1.7" fill="#cfd8dc"/><path d="M3.5 10a4 4 0 0 1 8 0zM0 9a2.8 2.8 0 0 1 4-2.5M15 9a2.8 2.8 0 0 0-4-2.5" fill="#cfd8dc"/></svg>
<svg class="a" style="left:294px;top:711px" width="12" height="12" viewBox="0 0 12 12"><circle cx="6" cy="6" r="6" fill="#cfd8dc"/><path d="M6 7l3-3" stroke="#37474f" stroke-width="1.2"/></svg>
<svg class="a" style="left:361px;top:710px" width="15" height="12" viewBox="0 0 15 12"><circle cx="5.5" cy="6.5" r="4.5" fill="#cfd8dc"/><circle cx="5.5" cy="6.5" r="1.6" fill="#37474f"/><circle cx="12" cy="3" r="2.5" fill="#cfd8dc"/><circle cx="12" cy="3" r=".9" fill="#37474f"/></svg>
<div class="a" style="left:430px;top:711px;width:1px;height:9px;background:#9aa5ab"></div>
<svg class="a" style="left:444px;top:711px" width="12" height="11" viewBox="0 0 12 11"><path d="M11.5 0L5 6.5l1.5 1.5zM4.5 7C3 7 2.5 8 2.3 9.3 2 10.5 1 10.8 0 11c2.5.5 5.5 0 6-2.5z" fill="#cfd8dc"/></svg>

<div class="a tx" style="transform:scaleX(0.8276);left:77px;top:712.88px;font-size:12.5px;color:#c3cdd2;">App Composer</div>
<div class="a tx" style="transform:scaleX(0.8634);left:185px;top:712.88px;font-size:12.5px;color:#c3cdd2;">All Apps</div>
<div class="a tx" style="transform:scaleX(0.7656);left:255px;top:712.88px;font-size:12.5px;color:#c3cdd2;">Users</div>
<div class="a tx" style="transform:scaleX(0.8996);left:310px;top:712.88px;font-size:12.5px;color:#c3cdd2;">Monitor</div>
<div class="a tx" style="transform:scaleX(0.8302);left:378.5px;top:712.88px;font-size:12.5px;color:#c3cdd2;">Settings</div>
<div class="a tx" style="transform:scaleX(0.8327);left:457.5px;top:712.88px;font-size:12.5px;color:#c3cdd2;">Quick Edit : On</div>
<svg class="a" style="left:1238.5px;top:686px" width="34" height="34" viewBox="0 0 34 34"><circle cx="17" cy="17" r="16.6" fill="#009a87" stroke="#6f7f86" stroke-width=".8"/><path d="M10 11.5l5.5 5.5-5.5 5.5M17 11.5l5.5 5.5-5.5 5.5" fill="none" stroke="#fff" stroke-width="2.6"/></svg>
</body></html>
